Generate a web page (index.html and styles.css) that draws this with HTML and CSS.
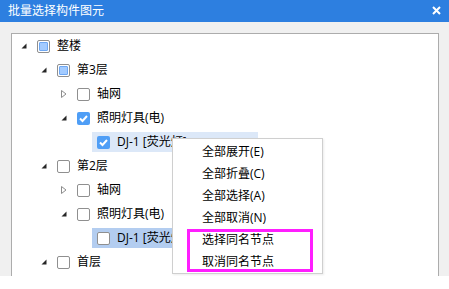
FILE: index.html
```html
<!DOCTYPE html>
<html lang="zh-CN">
<head>
    <meta charset="UTF-8">
    <title>批量选择构件图元</title>
    <link rel="stylesheet" href="styles.css">
</head>
<body>

    <div class="dialog">
        <div class="titlebar">
            <span class="title">批量选择构件图元</span>
            <svg class="close" width="9" height="9" viewBox="0 0 9 9">
                <path d="M1 1L8 8M8 1L1 8" stroke="#fff" stroke-width="2"/>
            </svg>
        </div>

        <div class="tree">
            <div class="row lv0">
                <span class="toggle"><svg width="6" height="6" viewBox="0 0 6 6"><polygon points="5.5,0.5 5.5,5.5 0.5,5.5" fill="#262626"/></svg></span>
                <span class="node"><span class="cb partial"></span><span class="label">整楼</span></span>
            </div>
            <div class="row lv1">
                <span class="toggle"><svg width="6" height="6" viewBox="0 0 6 6"><polygon points="5.5,0.5 5.5,5.5 0.5,5.5" fill="#262626"/></svg></span>
                <span class="node"><span class="cb partial"></span><span class="label">第3层</span></span>
            </div>
            <div class="row lv2">
                <span class="toggle"><svg width="6" height="8" viewBox="0 0 6 8"><polygon points="0.5,0.5 5,4 0.5,7.5" fill="none" stroke="#8c8c8c"/></svg></span>
                <span class="node"><span class="cb"></span><span class="label">轴网</span></span>
            </div>
            <div class="row lv2">
                <span class="toggle"><svg width="6" height="6" viewBox="0 0 6 6"><polygon points="5.5,0.5 5.5,5.5 0.5,5.5" fill="#262626"/></svg></span>
                <span class="node"><span class="cb checked"><svg width="13" height="13" viewBox="0 0 13 13"><path d="M3 6.5L5.5 9L10 4" fill="none" stroke="#fff" stroke-width="2"/></svg></span><span class="label">照明灯具(电)</span></span>
            </div>
            <div class="row lv3">
                <span class="toggle"></span>
                <span class="node hover"><span class="cb checked"><svg width="13" height="13" viewBox="0 0 13 13"><path d="M3 6.5L5.5 9L10 4" fill="none" stroke="#fff" stroke-width="2"/></svg></span><span class="label wide">DJ-1 [荧光灯]</span></span>
            </div>
            <div class="row lv1">
                <span class="toggle"><svg width="6" height="6" viewBox="0 0 6 6"><polygon points="5.5,0.5 5.5,5.5 0.5,5.5" fill="#262626"/></svg></span>
                <span class="node"><span class="cb"></span><span class="label">第2层</span></span>
            </div>
            <div class="row lv2">
                <span class="toggle"><svg width="6" height="8" viewBox="0 0 6 8"><polygon points="0.5,0.5 5,4 0.5,7.5" fill="none" stroke="#8c8c8c"/></svg></span>
                <span class="node"><span class="cb"></span><span class="label">轴网</span></span>
            </div>
            <div class="row lv2">
                <span class="toggle"><svg width="6" height="6" viewBox="0 0 6 6"><polygon points="5.5,0.5 5.5,5.5 0.5,5.5" fill="#262626"/></svg></span>
                <span class="node"><span class="cb"></span><span class="label">照明灯具(电)</span></span>
            </div>
            <div class="row lv3">
                <span class="toggle"></span>
                <span class="node selected"><span class="cb"></span><span class="label wide">DJ-1 [荧光灯]</span></span>
            </div>
            <div class="row lv1">
                <span class="toggle"><svg width="6" height="6" viewBox="0 0 6 6"><polygon points="5.5,0.5 5.5,5.5 0.5,5.5" fill="#262626"/></svg></span>
                <span class="node"><span class="cb"></span><span class="label">首层</span></span>
            </div>
        </div>

        <!-- Context Menu -->
        <ul class="menu">
            <li>全部展开(E)</li>
            <li>全部折叠(C)</li>
            <li>全部选择(A)</li>
            <li>全部取消(N)</li>
            <li>选择同名节点</li>
            <li>取消同名节点</li>
        </ul>

        <!-- Highlight box -->
        <div class="mark"></div>
    </div>

</body>
</html>
```

FILE: styles.css
```css
/* General */
body {
    margin: 0;
    padding: 0;
    background: #fff;
    font-family: "Open Sans", "Noto Sans CJK SC", sans-serif;
    font-size: 12px;
    color: #000;
}

/* Dialog */
.dialog {
    position: relative;
    width: 449px;
    height: 276px;
    background: #f0f0f0;
    overflow: hidden;
}

.titlebar {
    height: 22px;
    background: #2d7fe0;
    display: flex;
    align-items: center;
    justify-content: space-between;
    padding: 0 8px;
}

.title {
    color: #fff;
    font-size: 12px;
    line-height: 22px;
}

.close {
    display: block;
    margin-top: -2px;
}

/* Tree */
.tree {
    margin: 11px 10px 0 11px;
    height: 260px;
    background: #fff;
    border: 1px solid #acacac;
}

.row {
    height: 24px;
    display: flex;
    align-items: center;
}

.lv0 { padding-left: 4px; }
.lv1 { padding-left: 24px; }
.lv2 { padding-left: 44px; }
.lv3 { padding-left: 64px; }

.toggle {
    width: 16px;
    height: 24px;
    display: flex;
    align-items: center;
    justify-content: center;
    flex-shrink: 0;
}

.toggle svg {
    display: block;
}

.node {
    height: 20px;
    display: flex;
    align-items: center;
    padding: 0 4px 0 5px;
}

.node.hover {
    background: #dce8f8;
}

.node.selected {
    background: #b3cdf0;
}

.label {
    margin-left: 7px;
    line-height: 20px;
    white-space: nowrap;
}

.label.wide {
    min-width: 137px;
}

/* Checkboxes */
.cb {
    box-sizing: border-box;
    width: 13px;
    height: 13px;
    border: 1px solid #8f8f8f;
    border-radius: 2px;
    background: #fff;
    position: relative;
    flex-shrink: 0;
}

.cb.partial::after {
    content: "";
    position: absolute;
    left: 1px;
    top: 1px;
    width: 7px;
    height: 7px;
    background: #a3cbff;
    border: 1px solid #6ea7f2;
    border-radius: 1px;
}

.cb.checked {
    border: none;
    background: #4f9ef6;
}

.cb.checked svg {
    display: block;
}

/* Context Menu */
.menu {
    position: absolute;
    left: 172px;
    top: 138px;
    width: 149px;
    margin: 0;
    padding: 2px 0 0 0;
    list-style: none;
    background: #fff;
    border: 1px solid #cfcfcf;
    box-shadow: 1px 1px 2px rgba(0, 0, 0, 0.08);
}

.menu li {
    height: 22px;
    line-height: 22px;
    padding-left: 29px;
}

/* Annotation */
.mark {
    position: absolute;
    left: 187px;
    top: 229px;
    width: 126px;
    height: 43px;
    box-sizing: border-box;
    border: 3px solid #ff1eff;
}
```
